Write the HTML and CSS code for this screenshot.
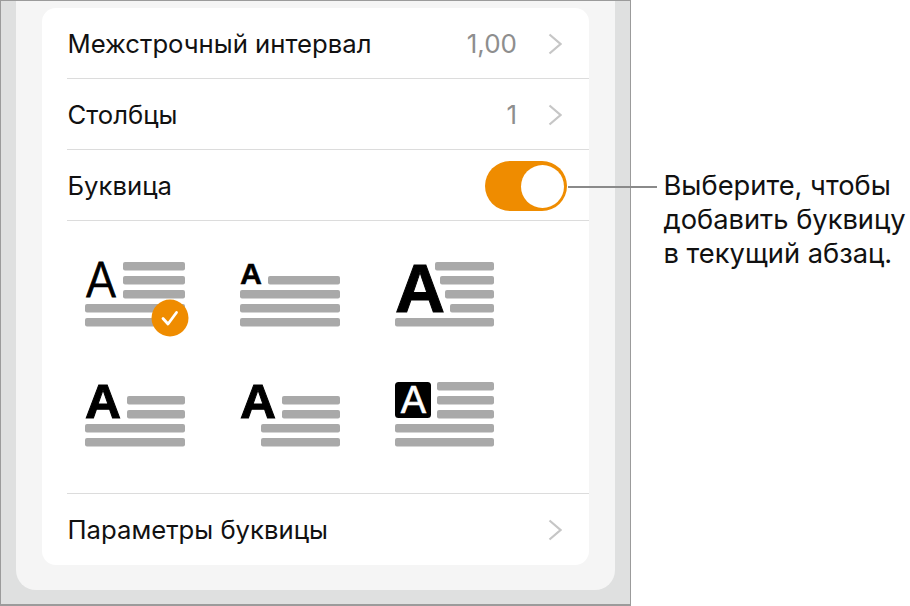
FILE: index.html
```html
<!DOCTYPE html>
<html lang="ru">
<head>
<meta charset="utf-8">
<title>Буквица</title>
<link rel="stylesheet" href="styles.css">
</head>
<body>
<main class="page">
  <section class="frame">
    <div class="panel">
      <div class="card">
        <div class="row"><span class="label">Межстрочный интервал</span><span class="value">1,00</span>
          <svg class="chev" viewBox="0 0 14 22"><path d="M1.5 1.5 L12.5 11 L1.5 20.5"/></svg></div>
        <div class="row"><span class="label">Столбцы</span><span class="value">1</span>
          <svg class="chev" viewBox="0 0 14 22"><path d="M1.5 1.5 L12.5 11 L1.5 20.5"/></svg></div>
        <div class="row row-toggle"><span class="label">Буквица</span>
          <span class="toggle"><span class="knob"></span></span></div>
        <div class="presets">
          <svg class="preset" viewBox="0 0 110 66">
            <text class="cap thin" x="0" y="35" textLength="32" lengthAdjust="spacingAndGlyphs">A</text>
            <rect x="38" y="0" width="62" height="8.5" rx="2"/><rect x="38" y="14" width="62" height="8.5" rx="2"/><rect x="38" y="28" width="62" height="8.5" rx="2"/>
            <rect x="0" y="42" width="100" height="8.5" rx="2"/><rect x="0" y="56" width="100" height="8.5" rx="2"/>
            <circle class="badge" cx="85" cy="56" r="18.5"/>
            <path class="tick" d="M78 56.5 L83 62 L91.5 50.5"/>
          </svg>
          <svg class="preset" viewBox="0 0 110 66">
            <text class="cap heavy small" x="0" y="22" font-size="30" textLength="22" lengthAdjust="spacingAndGlyphs">A</text>
            <rect x="28" y="14" width="72" height="8.5" rx="2"/><rect x="0" y="28" width="100" height="8.5" rx="2"/><rect x="0" y="42" width="100" height="8.5" rx="2"/><rect x="0" y="56" width="100" height="8.5" rx="2"/>
          </svg>
          <svg class="preset" viewBox="0 0 110 66">
            <text class="cap heavy" x="0" y="50" font-size="68" textLength="50" lengthAdjust="spacingAndGlyphs">A</text>
            <rect x="40" y="0" width="59" height="8.5" rx="2"/><rect x="45" y="14" width="54" height="8.5" rx="2"/><rect x="50" y="28" width="49" height="8.5" rx="2"/><rect x="55" y="42" width="44" height="8.5" rx="2"/>
            <rect x="0" y="56" width="99" height="8.5" rx="2"/>
          </svg>
          <svg class="preset" viewBox="0 0 110 66">
            <text class="cap heavy" x="0" y="36" font-size="49" textLength="36" lengthAdjust="spacingAndGlyphs">A</text>
            <rect x="42" y="14" width="58" height="8.5" rx="2"/><rect x="42" y="28" width="58" height="8.5" rx="2"/>
            <rect x="0" y="42" width="100" height="8.5" rx="2"/><rect x="0" y="56" width="100" height="8.5" rx="2"/>
          </svg>
          <svg class="preset" viewBox="0 0 110 66">
            <text class="cap heavy" x="0" y="36" font-size="49" textLength="36" lengthAdjust="spacingAndGlyphs">A</text>
            <rect x="42" y="14" width="58" height="8.5" rx="2"/><rect x="42" y="28" width="58" height="8.5" rx="2"/>
            <rect x="21" y="42" width="79" height="8.5" rx="2"/><rect x="21" y="56" width="79" height="8.5" rx="2"/>
          </svg>
          <svg class="preset" viewBox="0 0 110 66">
            <rect class="capbox" x="0" y="0" width="36" height="36" rx="3.5"/>
            <text class="cap inverse" x="18.5" y="31" text-anchor="middle">A</text>
            <rect x="42" y="0" width="57" height="8.5" rx="2"/><rect x="42" y="14" width="57" height="8.5" rx="2"/><rect x="42" y="28" width="57" height="8.5" rx="2"/>
            <rect x="0" y="42" width="99" height="8.5" rx="2"/><rect x="0" y="56" width="99" height="8.5" rx="2"/>
          </svg>
        </div>
        <div class="row row-last"><span class="label">Параметры буквицы</span>
          <svg class="chev" viewBox="0 0 14 22"><path d="M1.5 1.5 L12.5 11 L1.5 20.5"/></svg></div>
      </div>
    </div>
    <span class="leader"></span>
  </section>
  <aside class="note">Выберите, чтобы<br>добавить буквицу<br>в текущий абзац.</aside>
</main>
</body>
</html>
```
FILE: styles.css
```css
* { box-sizing: border-box; }
html, body { margin: 0; padding: 0; background: #fff; }
body { font-family: Inter, "Noto Sans", "Liberation Sans", sans-serif; color: #111; }
.page { display: flex; width: 910px; height: 606px; overflow: hidden; }
.frame {
  position: relative;
  width: 631px; height: 606px; flex: none;
  background: #dfe0e0;
  border: solid #9b9b9b; border-width: 1px 1px 2px 1px;
  padding: 0 15px 14px 15px;
}
.panel {
  height: 100%;
  background: #f5f5f5;
  border-radius: 0 0 20px 20px;
  padding: 7px 26px 25px 26px;
}
.card { height: 100%; background: #fff; border-radius: 14px; padding-left: 25px; }
.row {
  display: flex; align-items: center;
  height: 71px;
  border-bottom: 1px solid #dcdcdc;
  padding: 1px 27px 0 0;
}
.row-last { border-bottom: 0; padding-top: 0; }
.row-toggle { padding: 0 22px 0 0; }
.label { font-size: 25.7px; flex: 1; margin-left: 0.5px; }
.value { font-size: 26px; color: #8e8e8e; margin-right: 31px; }
.chev { width: 14px; height: 22px; fill: none; stroke: #c6c6c6; stroke-width: 2.2; }
.toggle {
  display: block; width: 82px; height: 50px;
  margin-top: 2px;
  border-radius: 25px; background: #ef8c00;
  padding: 3.5px 3px 3.5px 36px;
}
.knob { display: block; width: 43px; height: 43px; border-radius: 50%; background: #fff; }
.presets {
  display: grid;
  grid-template-columns: repeat(3, 110px);
  column-gap: 45px; row-gap: 54px;
  padding: 41px 0 45px 18px;
  border-bottom: 1px solid #dcdcdc;
}
.preset { display: block; width: 110px; height: 66px; overflow: visible; fill: #a9a9a9; }
.cap { font-family: "Liberation Sans", Arial, sans-serif; fill: #000; }
.thin { font-family: Inter, sans-serif; font-weight: 300; font-size: 48px; stroke: #000; stroke-width: 0.8px; }
.heavy { font-family: "Liberation Sans", Arial, sans-serif; font-weight: 700; stroke: #000; stroke-width: 1px; }
.small { stroke-width: 0.4px; }
.capbox { fill: #000; }
.inverse { font-size: 38px; fill: #fff; font-weight: 400; stroke: #fff; stroke-width: 0.6px; }
.badge { fill: #ef8c00; }
.tick { fill: none; stroke: #fff; stroke-width: 2.8; stroke-linecap: round; stroke-linejoin: round; }
.leader {
  position: absolute; left: 567px; top: 185px;
  width: 89px; height: 2px; background: #8a8a8a;
}
.note { padding: 169px 0 0 32.5px; font-size: 27.3px; line-height: 34px; white-space: nowrap; color: #111; }
```
